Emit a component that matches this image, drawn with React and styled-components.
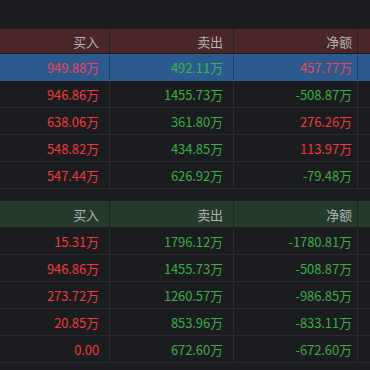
import React from "react";
import styled, { createGlobalStyle } from "styled-components";

const Global = createGlobalStyle`
  html, body { margin: 0; padding: 0; background: #1b1c20; }
  body { font-family: "Microsoft YaHei", "Noto Sans CJK SC", "Noto Sans", sans-serif; }
`;

const Page = styled.div`
  width: 370px;
  height: 370px;
  overflow: hidden;
  background: #1b1c20;
  padding-top: 29px;
  box-sizing: border-box;
`;

const Section = styled.div`
  margin-bottom: ${(p) => p.$gap || 0}px;
`;

const Row = styled.div`
  display: grid;
  grid-template-columns: 110px 124px 124px 20px;
  height: ${(p) => p.$h || 27}px;
  background: ${(p) => p.$bg || "transparent"};
  border-bottom: 1px solid ${(p) => p.$line || "#2a2b30"};
  box-sizing: border-box;
`;

const Cell = styled.div`
  display: flex;
  align-items: center;
  justify-content: flex-end;
  padding-right: ${(p) => p.$pad ?? 10}px;
  border-right: 1px solid ${(p) => p.$line || "#2c2d33"};
  font-size: 13px;
  color: ${(p) => p.$color};
  white-space: nowrap;
  letter-spacing: -0.1px;
`;

const RED = "#f23a3a";
const GREEN = "#3aae3f";
const HEAD = "#b4b4b4";

const top = [
  ["949.88万", "492.11万", "457.77万"],
  ["946.86万", "1455.73万", "-508.87万"],
  ["638.06万", "361.80万", "276.26万"],
  ["548.82万", "434.85万", "113.97万"],
  ["547.44万", "626.92万", "-79.48万"],
];
const bottom = [
  ["15.31万", "1796.12万", "-1780.81万"],
  ["946.86万", "1455.73万", "-508.87万"],
  ["273.72万", "1260.57万", "-986.85万"],
  ["20.85万", "853.96万", "-833.11万"],
  ["0.00", "672.60万", "-672.60万"],
];

const netColor = (v) => (v.startsWith("-") ? GREEN : RED);

function Header({ bg, h }) {
  return (
    <Row $bg={bg} $h={h} $line="#1b1c20">
      <Cell $color={HEAD} $line="#22232a">买入</Cell>
      <Cell $color={HEAD} $line="#22232a">卖出</Cell>
      <Cell $color={HEAD} $pad={5} $line="#22232a">净额</Cell>
      <Cell $line="transparent" />
    </Row>
  );
}

function DataRow({ r, selected }) {
  const bg = selected ? "#2b5a8e" : "transparent";
  const line = selected ? "#1f3e63" : "#2c2d33";
  return (
    <Row $bg={bg} $line={selected ? "#2b5a8e" : "#2a2b30"}>
      <Cell $color={selected ? "#f5405a" : RED} $line={line}>{r[0]}</Cell>
      <Cell $color={selected ? "#3db54a" : GREEN} $line={line}>{r[1]}</Cell>
      <Cell $color={selected ? "#f5405a" : netColor(r[2])} $pad={5} $line={line}>{r[2]}</Cell>
      <Cell $line="transparent" />
    </Row>
  );
}

export default function App() {
  return (
    <Page>
      <Global />
      <Section $gap={12}>
        <Header bg="#4a2628" h={25} />
        {top.map((r, i) => (
          <DataRow key={i} r={r} selected={i === 0} />
        ))}
      </Section>
      <Section>
        <Header bg="#263a2b" h={27} />
        {bottom.map((r, i) => (
          <DataRow key={i} r={r} />
        ))}
      </Section>
    </Page>
  );
}
